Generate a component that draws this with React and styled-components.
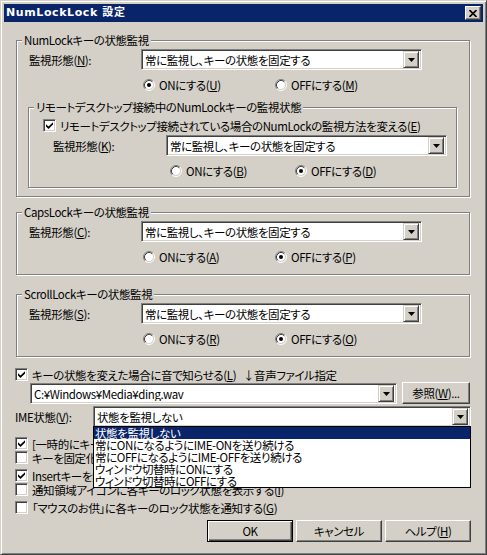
import styled, { createGlobalStyle } from 'styled-components'

const GlobalStyle = createGlobalStyle`
  html, body {
    margin: 0;
    padding: 0;
    background: #d4d0c8;
  }
  body {
    font-family: "Noto Sans CJK JP", "Noto Sans", sans-serif;
    font-size: 12px;
  }
`

const Window = styled.div`
  box-sizing: border-box;
  width: 487px;
  height: 555px;
  padding: 3px;
  background: #d4d0c8;
  border: 1px solid;
  border-color: #d4d0c8 #404040 #404040 #d4d0c8;
  box-shadow: inset 1px 1px #fff, inset -1px -1px #808080;
  color: #000;
  font-family: "Noto Sans CJK JP", sans-serif;
  font-size: 11.5px;
  font-feature-settings: 'palt';
  letter-spacing: -0.4px;
  display: flex;
  flex-direction: column;
`

const TitleBar = styled.div`
  height: 18px;
  background: #0a246a;
  display: flex;
  align-items: center;
  justify-content: space-between;
  padding: 0 2px 0 2px;
`

const Title = styled.span`
  color: #fff;
  font-family: "DejaVu Sans", "Noto Sans CJK JP", sans-serif;
  font-weight: bold;
  font-size: 11px;
  line-height: 14px;
  letter-spacing: 0.6px;
  font-feature-settings: normal;
`

const CloseButton = styled.span`
  box-sizing: border-box;
  width: 16px;
  height: 14px;
  background: #d4d0c8;
  border: 1px solid;
  border-color: #fff #404040 #404040 #fff;
  box-shadow: inset -1px -1px #808080;
  display: flex;
  align-items: center;
  justify-content: center;
`

const Client = styled.div`
  flex: 1;
  padding: 18px 13px 0 12px;
  display: flex;
  flex-direction: column;
`

const GroupBox = styled.div`
  border: 1px solid #808080;
  box-shadow: inset 1px 1px #fff, 1px 1px #fff;
  margin: ${({ $margin }) => $margin || '0'};
  padding-bottom: ${({ $pb }) => $pb}px;
`

const Caption = styled.div`
  display: table;
  margin: -8px 0 0 5px;
  padding: 0 2px;
  line-height: 14px;
  background: #d4d0c8;
  white-space: nowrap;
`

const FieldRow = styled.div`
  display: flex;
  align-items: center;
  height: 21px;
  margin-top: ${({ $mt }) => $mt}px;
  padding-left: ${({ $pl }) => $pl}px;
`

const FieldLabel = styled.span`
  width: ${({ $w }) => $w}px;
  flex: none;
  margin-left: ${({ $ml }) => $ml || 0}px;
  line-height: 14px;
  white-space: nowrap;
`

const ComboBox = styled.div`
  box-sizing: border-box;
  position: relative;
  width: ${({ $w }) => $w}px;
  height: 21px;
  flex: none;
  padding: 2px;
  background: #fff;
  border: 1px solid;
  border-color: #808080 #fff #fff #808080;
  box-shadow: inset 1px 1px #404040, inset -1px -1px #d4d0c8;
  display: flex;
  align-items: center;
`

const ComboText = styled.span`
  flex: 1;
  padding-left: 1px;
  line-height: 14px;
  white-space: nowrap;
  overflow: hidden;
`

const DropButton = styled.span`
  box-sizing: border-box;
  width: 16px;
  height: 17px;
  flex: none;
  background: #d4d0c8;
  border: 1px solid;
  border-color: #d4d0c8 #404040 #404040 #d4d0c8;
  box-shadow: inset 1px 1px #fff, inset -1px -1px #808080;
  display: flex;
  align-items: center;
  justify-content: center;
`

const DropList = styled.ul`
  position: absolute;
  top: 100%;
  left: -1px;
  right: -1px;
  margin: 0;
  padding: 0;
  list-style: none;
  background: #fff;
  border: 1px solid #000;
  z-index: 2;
`

const DropItem = styled.li`
  height: 12px;
  line-height: 12px;
  padding-left: 1px;
  white-space: nowrap;
  background: ${({ $active }) => ($active ? '#0a246a' : '#fff')};
  color: ${({ $active }) => ($active ? '#fff' : '#000')};
`

const RadioRow = styled.div`
  display: flex;
  align-items: center;
  height: 14px;
  margin-top: ${({ $mt }) => $mt}px;
  padding-left: ${({ $pl }) => $pl}px;
`

const RadioItem = styled.span`
  display: flex;
  align-items: center;
  gap: 4px;
  width: ${({ $w }) => ($w ? `${$w}px` : 'auto')};
  line-height: 14px;
  white-space: nowrap;
`

const CheckRow = styled.div`
  display: flex;
  align-items: center;
  height: 13px;
  margin-top: ${({ $mt }) => $mt}px;
  padding-left: ${({ $pl }) => $pl || 0}px;
  white-space: nowrap;
`

const CheckLabel = styled.span`
  display: flex;
  align-items: center;
  gap: 4px;
  width: ${({ $w }) => ($w ? `${$w}px` : 'auto')};
  margin-left: ${({ $ml }) => $ml || 0}px;
  line-height: 14px;
`

const CheckBox = styled.span`
  box-sizing: border-box;
  width: 13px;
  height: 13px;
  flex: none;
  background: #fff;
  border: 1px solid;
  border-color: #808080 #fff #fff #808080;
  box-shadow: inset 1px 1px #404040, inset -1px -1px #d4d0c8;
  display: flex;
  align-items: center;
  justify-content: center;
`

const FileRow = styled.div`
  display: flex;
  align-items: flex-start;
  gap: 5px;
  margin-top: 1px;
  padding-left: 14px;
  height: 22px;
  & > :first-child {
    margin-top: 1px;
  }
`

const Button = styled.button`
  box-sizing: border-box;
  width: ${({ $w }) => $w}px;
  height: ${({ $h }) => $h || 22}px;
  margin: 0;
  padding: 0;
  font: inherit;
  letter-spacing: inherit;
  line-height: 14px;
  color: #000;
  background: #d4d0c8;
  border: 1px solid;
  border-color: ${({ $default }) =>
    $default ? '#000' : '#fff #404040 #404040 #fff'};
  box-shadow: ${({ $default }) =>
    $default
      ? 'inset 1px 1px #fff, inset -1px -1px #404040, inset -2px -2px #808080'
      : 'inset -1px -1px #808080'};
`

const ButtonRow = styled.div`
  display: flex;
  justify-content: flex-end;
  gap: 3px;
  margin: 6px -1px 0 0;
`

const Notice = styled.span`
  line-height: 14px;
`

const Radio = ({ checked }) => (
  <svg width="12" height="12" viewBox="0 0 12 12">
    <circle cx="6" cy="6" r="4.5" fill="#fff" />
    <path d="M2.11 9.89A5.5 5.5 0 0 1 9.89 2.11" fill="none" stroke="#808080" />
    <path d="M9.89 2.11A5.5 5.5 0 0 1 2.11 9.89" fill="none" stroke="#fff" />
    <path d="M2.82 9.18A4.5 4.5 0 0 1 9.18 2.82" fill="none" stroke="#404040" />
    <path d="M9.18 2.82A4.5 4.5 0 0 1 2.82 9.18" fill="none" stroke="#d4d0c8" />
    {checked && <circle cx="6" cy="6" r="2" fill="#000" />}
  </svg>
)

const Check = ({ checked }) => (
  <CheckBox>
    {checked && (
      <svg width="7" height="7" viewBox="0 0 7 7">
        <path d="M0 2.2L2.5 4.6L7 0.2V2.6L2.5 7L0 4.6Z" fill="#000" />
      </svg>
    )}
  </CheckBox>
)

const Arrow = () => (
  <svg width="7" height="4" viewBox="0 0 7 4">
    <path d="M0 0H7L3.5 4Z" fill="#000" />
  </svg>
)

const Combo = ({ width, value, children }) => (
  <ComboBox $w={width}>
    <ComboText>{value}</ComboText>
    <DropButton>
      <Arrow />
    </DropButton>
    {children}
  </ComboBox>
)

// text with a mnemonic key in brackets, e.g. ONにする(U)
const Mn = ({ text, k, after = '' }) => (
  <span>
    {text}(<u>{k}</u>){after}
  </span>
)

const MODE = '常に監視し、キーの状態を固定する'

const imeOptions = [
  '状態を監視しない',
  '常にONになるようにIME-ONを送り続ける',
  '常にOFFになるようにIME-OFFを送り続ける',
  'ウィンドウ切替時にONにする',
  'ウィンドウ切替時にOFFにする',
]

const bottomChecks = [
  { text: '[一時的にキーの固定を解除する]を使う', k: 'T', checked: true, mt: 10 },
  { text: 'キーを固定化する際に通知する', k: 'F', checked: false, mt: 1 },
  { text: 'Insertキーを無効にする', k: 'N', checked: true, mt: 5 },
  { text: '通知領域アイコンに各キーのロック状態を表示する', k: 'I', checked: false, mt: 1 },
  { text: '「マウスのお供」に各キーのロック状態を通知する', k: 'G', checked: false, mt: 5 },
]

const LockGroup = ({ name, modeKey, onKey, offKey, margin, pb, children }) => (
  <GroupBox $margin={margin} $pb={pb}>
    <Caption>{name}キーの状態監視</Caption>
    <FieldRow $mt={2} $pl={12}>
      <FieldLabel $w={112}>
        <Mn text="監視形態" k={modeKey} after=":" />
      </FieldLabel>
      <Combo width={281} value={MODE} />
    </FieldRow>
    <RadioRow $mt={8} $pl={126}>
      <RadioItem $w={132}>
        <Radio checked={name === 'NumLock'} />
        <Mn text="ONにする" k={onKey} />
      </RadioItem>
      <RadioItem>
        <Radio checked={name !== 'NumLock'} />
        <Mn text="OFFにする" k={offKey} />
      </RadioItem>
    </RadioRow>
    {children}
  </GroupBox>
)

export default function App() {
  return (
    <>
      <GlobalStyle />
      <Window>
        <TitleBar>
          <Title>NumLockLock 設定</Title>
          <CloseButton>
            <svg width="8" height="7" viewBox="0 0 8 7">
              <path d="M0.5 0L7.5 7M7.5 0L0.5 7" stroke="#000" strokeWidth="1.6" />
            </svg>
          </CloseButton>
        </TitleBar>
        <Client>
          <LockGroup name="NumLock" modeKey="N" onKey="U" offKey="M" pb={8}>
            <GroupBox $margin="15px 12px 0 11px" $pb={9}>
              <Caption>リモートデスクトップ接続中のNumLockキーの監視状態</Caption>
              <CheckRow $mt={5} $pl={14}>
                <CheckLabel>
                  <Check checked />
                  <Mn text="リモートデスクトップ接続されている場合のNumLockの監視方法を変える" k="E" />
                </CheckLabel>
              </CheckRow>
              <FieldRow $mt={3} $pl={24}>
                <FieldLabel $w={113}>
                  <Mn text="監視形態" k="K" after=":" />
                </FieldLabel>
                <Combo width={281} value={MODE} />
              </FieldRow>
              <RadioRow $mt={8} $pl={141}>
                <RadioItem $w={125}>
                  <Radio />
                  <Mn text="ONにする" k="B" />
                </RadioItem>
                <RadioItem>
                  <Radio checked />
                  <Mn text="OFFにする" k="D" />
                </RadioItem>
              </RadioRow>
            </GroupBox>
          </LockGroup>
          <LockGroup name="CapsLock" modeKey="C" onKey="A" offKey="P" margin="15px 0 0" pb={10} />
          <LockGroup name="ScrollLock" modeKey="S" onKey="R" offKey="O" margin="19px 0 0" pb={10} />

          <CheckRow $mt={11}>
            <CheckLabel $w={228} $ml={-1}>
              <Check checked />
              <Mn text="キーの状態を変えた場合に音で知らせる" k="L" />
            </CheckLabel>
            <Notice>↓音声ファイル指定</Notice>
          </CheckRow>
          <FileRow>
            <Combo width={367} value="C:¥Windows¥Media¥ding.wav" />
            <Button $w={70}>
              <Mn text="参照" k="W" after="..." />
            </Button>
          </FileRow>
          <FieldRow $mt={2} $pl={0}>
            <FieldLabel $w={78} $ml={-1}>
              <Mn text="IME状態" k="V" after=":" />
            </FieldLabel>
            <Combo width={378} value="状態を監視しない">
              <DropList>
                {imeOptions.map((opt, i) => (
                  <DropItem key={opt} $active={i === 0}>
                    {opt}
                  </DropItem>
                ))}
              </DropList>
            </Combo>
          </FieldRow>
          {bottomChecks.map((c) => (
            <CheckRow key={c.text} $mt={c.mt}>
              <CheckLabel $ml={-1}>
                <Check checked={c.checked} />
                <Mn text={c.text} k={c.k} />
              </CheckLabel>
            </CheckRow>
          ))}
          <ButtonRow>
            <Button $w={86} $default>
              OK
            </Button>
            <Button $w={86}>キャンセル</Button>
            <Button $w={86}>
              <Mn text="ヘルプ" k="H" />
            </Button>
          </ButtonRow>
        </Client>
      </Window>
    </>
  )
}
